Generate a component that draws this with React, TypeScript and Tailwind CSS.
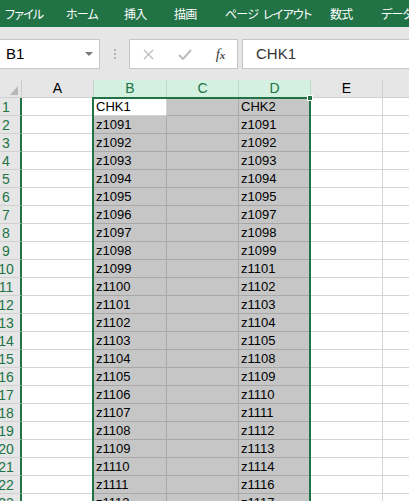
import React from "react";

const colB = ["CHK1","z1091","z1092","z1093","z1094","z1095","z1096","z1097","z1098","z1099","z1100","z1101","z1102","z1103","z1104","z1105","z1106","z1107","z1108","z1109","z1110","z1111","z1112"];
const colD = ["CHK2","z1091","z1092","z1093","z1094","z1095","z1097","z1098","z1099","z1101","z1102","z1103","z1104","z1105","z1108","z1109","z1110","z1111","z1112","z1113","z1114","z1116","z1117"];

export default function App() {
  return (
    <div className="w-[409px] h-[501px] overflow-hidden bg-white relative" style={{ fontFamily: '"Liberation Sans", "Noto Sans CJK JP", sans-serif' }}>
      {/* Ribbon tabs */}
      <div className="h-[27px] bg-[#217346] flex items-center pl-[5px] text-white text-[12px] tracking-[-0.8px] whitespace-nowrap overflow-hidden" style={{ fontFamily: '"Noto Sans CJK JP", sans-serif', fontFeatureSettings: '"palt"' }}>
        <div className="w-[61px] shrink-0">ファイル</div>
        <div className="w-[58px] shrink-0">ホーム</div>
        <div className="w-[50px] shrink-0">挿入</div>
        <div className="w-[51px] shrink-0">描画</div>
        <div className="w-[105px] shrink-0">ページ <span className="ml-[3px]">レイアウト</span></div>
        <div className="w-[51px] shrink-0">数式</div>
        <div className="w-[50px] shrink-0">データ</div>
      </div>
      {/* Formula bar */}
      <div className="bg-[#e6e6e6] pt-[12px] pb-[11px] flex items-stretch">
        <div className="ml-[-1px] w-[101px] h-[30px] bg-white border border-[#c6c6c6] flex items-center justify-between pl-[6px] pr-[6px]">
          <span className="text-[15px] text-black">B1</span>
          <svg width="8" height="5" viewBox="0 0 8 5"><path d="M0 0 L8 0 L4 4 Z" fill="#7a7a7a" /></svg>
        </div>
        <div className="w-[29px] flex flex-col items-center justify-center gap-[2px]">
          <div className="w-[2px] h-[2px] bg-[#b4b4b4]" />
          <div className="w-[2px] h-[2px] bg-[#b4b4b4]" />
          <div className="w-[2px] h-[2px] bg-[#b4b4b4]" />
        </div>
        <div className="w-[109px] h-[30px] bg-white border border-[#c6c6c6] flex items-center">
          <div className="w-[36px] flex justify-center">
            <svg width="11" height="11" viewBox="0 0 11 11"><path d="M1 1 L10 10 M10 1 L1 10" stroke="#bdbdbd" strokeWidth="1.3" /></svg>
          </div>
          <div className="w-[38px] flex justify-center">
            <svg width="14" height="11" viewBox="0 0 14 11"><path d="M1 6 L5 10 L13 1" stroke="#bdbdbd" strokeWidth="2" fill="none" /></svg>
          </div>
          <div className="flex-1 flex justify-center items-baseline text-[15px] text-[#444] italic" style={{ fontFamily: '"Liberation Serif", serif' }}>
            <span>f</span><span className="text-[11px] font-bold">x</span>
          </div>
        </div>
        <div className="ml-[4px] flex-1 h-[30px] bg-white border border-[#c6c6c6] border-r-0 flex items-center pl-[13px] text-[15px] text-[#333]">
          CHK1
        </div>
      </div>
      {/* Grid */}
      <div className="relative text-[13px]">
        {/* header row */}
        <div className="flex h-[18px]">
          <div className="w-[22px] shrink-0 bg-[#e6e6e6] border-r border-b border-[#d0d0d0] relative overflow-hidden">
            <svg className="absolute left-[10px] top-[6px]" width="8" height="9" viewBox="0 0 8 9"><path d="M8 0 L8 9 L0 9 Z" fill="#b8b8b8" /></svg>
          </div>
          <div className="w-[72px] shrink-0 bg-[#e6e6e6] border-r border-b border-[#d0d0d0] flex items-center justify-center text-black text-[14px]">A</div>
          <div className="w-[73px] shrink-0 bg-[#d3f0e0] border-r border-b border-[#b9dcc8] flex items-center justify-center text-[#217346] text-[14px]">B</div>
          <div className="w-[72px] shrink-0 bg-[#d3f0e0] border-r border-b border-[#b9dcc8] flex items-center justify-center text-[#217346] text-[14px]">C</div>
          <div className="w-[72px] shrink-0 bg-[#d3f0e0] border-r border-b border-[#b9dcc8] flex items-center justify-center text-[#217346] text-[14px]">D</div>
          <div className="w-[72px] shrink-0 bg-[#e6e6e6] border-r border-b border-[#d0d0d0] flex items-center justify-center text-black text-[14px]">E</div>
          <div className="flex-1 bg-[#e6e6e6] border-b border-[#d0d0d0]" />
        </div>
        {colB.map((b, i) => (
          <div key={i} className="flex h-[18px]">
            <div className="w-[22px] shrink-0 bg-[#e6e6e6] border-r-2 border-r-[#217346] border-b border-b-[#d0d0d0] flex items-center">
              <div className="w-[12px] flex justify-center text-[#217346] text-[14px] leading-none whitespace-nowrap">{i + 1}</div>
            </div>
            <div className="w-[72px] shrink-0 border-r border-b border-[#d4d4d4]" />
            <div className={`w-[73px] shrink-0 border-r border-b ${i === 0 ? "bg-white border-[#d4d4d4]" : "bg-[#c6c6c6] border-[#a8a8a8]"} flex items-center pl-[2px] text-black`}>{b}</div>
            <div className="w-[72px] shrink-0 border-r border-b bg-[#c6c6c6] border-[#a8a8a8]" />
            <div className="w-[72px] shrink-0 border-r border-b bg-[#c6c6c6] border-[#a8a8a8] flex items-center pl-[2px] text-black">{colD[i]}</div>
            <div className="w-[72px] shrink-0 border-r border-b border-[#d4d4d4]" />
            <div className="flex-1 border-b border-[#d4d4d4]" />
          </div>
        ))}
        {/* selection overlay */}
        <div className="absolute left-[92px] top-[17px] w-[219px] h-[500px] border-2 border-[#217346] border-b-0 pointer-events-none" />
        <div className="absolute left-[307px] top-[15px] w-[6px] h-[6px] bg-[#217346] border border-white" />
      </div>
    </div>
  );
}
